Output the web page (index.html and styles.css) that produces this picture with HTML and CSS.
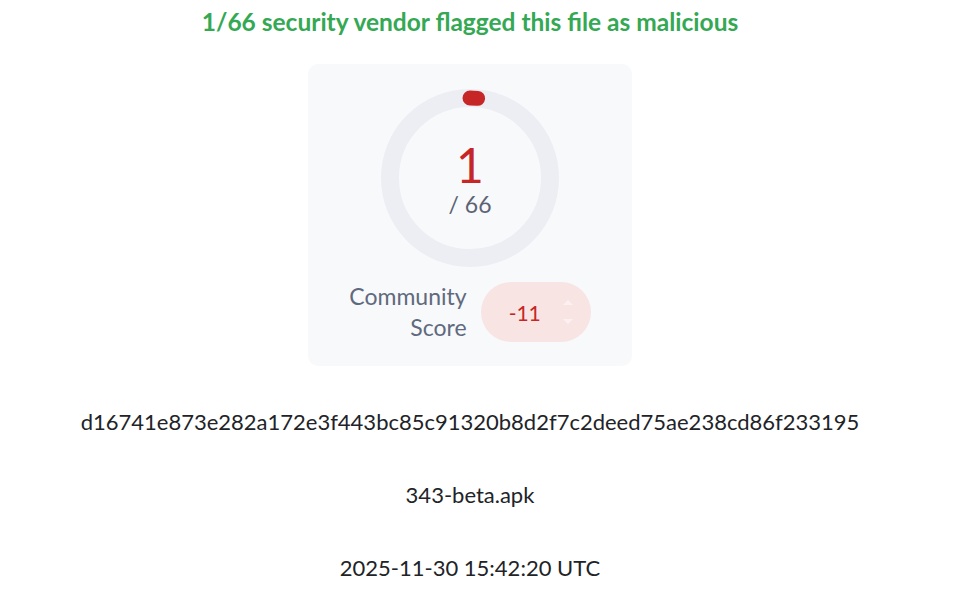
FILE: index.html
```html
<!DOCTYPE html>
<html>
<head>
<meta charset="utf-8">
<link rel="stylesheet" href="styles.css">
</head>
<body>
<main class="page">
  <h1 class="verdict">1/66 security vendor flagged this file as malicious</h1>
  <section class="card">
    <div class="gauge">
      <svg class="ring" width="180" height="180" viewBox="0 0 180 180">
        <circle cx="90" cy="90" r="80" fill="none" stroke="#eceef3" stroke-width="18"/>
        <path d="M90 10 A80 80 0 0 1 97.6 10.36" fill="none" stroke="#c62626" stroke-width="15" stroke-linecap="round"/>
      </svg>
      <div class="gauge-text">
        <div class="positives">1</div>
        <div class="total">/ 66</div>
      </div>
    </div>
    <div class="community">
      <div class="community-label">Community<br>Score</div>
      <div class="score-pill">
        <span class="score-value">-11</span>
        <svg class="spinner" width="12" height="30" viewBox="0 0 12 30">
          <path d="M1 8 L6 3 L11 8 Z" fill="#fbf1f1"/>
          <path d="M1 22 L6 27 L11 22 Z" fill="#fbf1f1"/>
        </svg>
      </div>
    </div>
  </section>
  <p class="info hash">d16741e873e282a172e3f443bc85c91320b8d2f7c2deed75ae238cd86f233195</p>
  <p class="info">343-beta.apk</p>
  <p class="info">2025-11-30 15:42:20 UTC</p>
</main>
</body>
</html>
```
FILE: styles.css
```css
html, body {
  margin: 0;
  padding: 0;
  background: #ffffff;
}
body {
  font-family: Lato, "Open Sans", sans-serif;
  color: #212327;
}
.page {
  display: flex;
  flex-direction: column;
  align-items: center;
  width: 940px;
}
.verdict {
  margin: 7px 0 0 0;
  font-size: 24.5px;
  line-height: 30px;
  font-weight: 700;
  color: #34a853;
}
.card {
  margin-top: 27px;
  width: 324px;
  height: 302px;
  box-sizing: border-box;
  padding-top: 24px;
  background: #f8f9fb;
  border-radius: 10px;
  display: flex;
  flex-direction: column;
  align-items: center;
}
.gauge {
  position: relative;
  width: 180px;
  height: 180px;
}
.ring {
  display: block;
}
.gauge-text {
  position: absolute;
  inset: 0;
  display: flex;
  flex-direction: column;
  align-items: center;
  justify-content: center;
  padding-top: 2px;
}
.positives {
  font-size: 48px;
  line-height: 50px;
  color: #c62626;
}
.total {
  font-size: 23px;
  line-height: 28px;
  color: #5b6375;
}
.community {
  margin-top: 13px;
  display: flex;
  align-items: center;
  gap: 14px;
}
.community-label {
  text-align: right;
  font-size: 23px;
  line-height: 31px;
  color: #5f6a7e;
}
.score-pill {
  width: 110px;
  height: 60px;
  border-radius: 30px;
  background: #f8e5e3;
  display: flex;
  align-items: center;
  box-sizing: border-box;
  padding-left: 28px;
}
.score-value {
  font-size: 21px;
  color: #c62626;
  width: 53px;
}
.spinner {
  display: block;
}
.info {
  margin: 0;
  font-size: 22px;
  line-height: 28px;
  color: #212327;
}
.hash {
  margin-top: 42px;
}
.info + .info {
  margin-top: 45px;
}
```
